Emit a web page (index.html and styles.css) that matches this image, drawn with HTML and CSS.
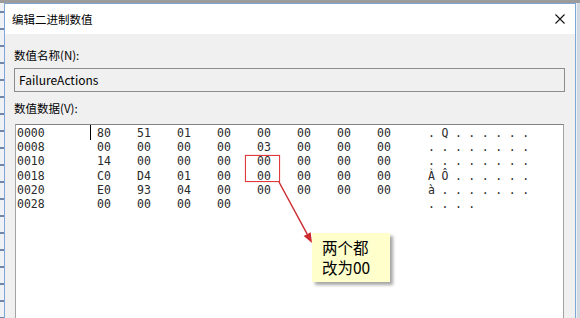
FILE: index.html
```html
<!DOCTYPE html>
<html lang="zh-CN">
  <head>
    <meta charset="UTF-8" />
    <title>编辑二进制数值</title>
    <link rel="stylesheet" href="styles.css">
  </head>
  <body>
    <div class="screen">
      <div class="topband"></div>
      <div class="main">
        <div class="behind"></div>
        <div class="dialog">
          <div class="titlebar">
            <span class="title">编辑二进制数值</span>
            <svg class="close" width="10" height="10" viewBox="0 0 10 10">
              <path d="M0.5 0.5 L9.5 9.5 M9.5 0.5 L0.5 9.5" stroke="#111" stroke-width="1.1" fill="none" />
            </svg>
          </div>
          <div class="content">
            <div class="field-label">数值名称(N):</div>
            <div class="name-input">FailureActions</div>
            <div class="field-label second">数值数据(V):</div>
            <div class="hexbox">
              <div class="row"><span>0000</span><span class="cur">80</span><span>51</span><span>01</span><span>00</span><span>00</span><span>00</span><span>00</span><span>00</span><span class="ascii">. Q . . . . . .</span></div>
              <div class="row"><span>0008</span><span>00</span><span>00</span><span>00</span><span>00</span><span>03</span><span>00</span><span>00</span><span>00</span><span class="ascii">. . . . . . . .</span></div>
              <div class="row"><span>0010</span><span>14</span><span>00</span><span>00</span><span>00</span><span>00</span><span>00</span><span>00</span><span>00</span><span class="ascii">. . . . . . . .</span></div>
              <div class="row"><span>0018</span><span>C0</span><span>D4</span><span>01</span><span>00</span><span>00</span><span>00</span><span>00</span><span>00</span><span class="ascii">À Ô . . . . . .</span></div>
              <div class="row"><span>0020</span><span>E0</span><span>93</span><span>04</span><span>00</span><span>00</span><span>00</span><span>00</span><span>00</span><span class="ascii">à . . . . . . .</span></div>
              <div class="row"><span>0028</span><span>00</span><span>00</span><span>00</span><span>00</span><span></span><span></span><span></span><span></span><span class="ascii">. . . .</span></div>

              <!-- 标注 -->
              <div class="mark"></div>
              <svg class="arrow" width="320" height="140" viewBox="0 0 320 140">
                <path d="M263 57 L291.2 109.2" stroke="#cc2a2e" stroke-width="1.4" fill="none" />
                <path d="M287.7 111.1 L294.7 107.3 L296 118 Z" fill="#cc2a2e" />
              </svg>
              <div class="callout">
                <div class="line">两个都</div>
                <div class="line">改为00</div>
              </div>
            </div>
          </div>
        </div>
        <div class="after"></div>
      </div>
    </div>
  </body>
</html>
```

FILE: styles.css
```css
* {
  margin: 0;
  padding: 0;
  box-sizing: border-box;
}
body {
  width: 580px;
  height: 318px;
  overflow: hidden;
  background: #d6dde6;
  font-family: "Noto Sans CJK SC", sans-serif;
  color: #000;
}
.screen {
  display: flex;
  flex-direction: column;
  height: 318px;
}
.topband {
  height: 3px;
  background: #9b9b9b;
}
.main {
  display: flex;
  flex: 1;
  min-height: 0;
}
.behind {
  width: 4px;
  background: repeating-linear-gradient(to bottom, #eef1f5 0, #eef1f5 8px, #6f86a8 8px, #6f86a8 10px, #eef1f5 10px, #eef1f5 17px);
}
.after {
  width: 4px;
  background: #d2d9e2;
  border-left: 1px solid #eef1f4;
}
.dialog {
  flex: 1;
  display: flex;
  flex-direction: column;
  background: #f0f0f0;
  border: 1px solid #7ea6d6;
  border-bottom: none;
}
.titlebar {
  height: 30px;
  background: #fff;
  display: flex;
  align-items: center;
  justify-content: space-between;
  padding: 0 10px 0 7px;
}
.title {
  font-size: 11.5px;
  line-height: 16px;
}
.close {
  display: block;
}
.content {
  flex: 1;
  min-height: 0;
  display: flex;
  flex-direction: column;
  padding: 13px 10px 0 9px;
}
.field-label {
  font-size: 11.5px;
  line-height: 16px;
}
.field-label.second {
  margin-top: 8px;
}
.name-input {
  margin-top: 5px;
  height: 24px;
  border: 1px solid #8c8c8c;
  background: #f0f0f0;
  padding-left: 4px;
  font-size: 12px;
  line-height: 22px;
}
.hexbox {
  position: relative;
  flex: 1;
  margin: 8px 1px 0 1px;
  padding: 1px 0 0 1px;
  background: #fff;
  border: 1px solid #a3a3a3;
  border-top-color: #828282;
  border-bottom: none;
  font-family: "DejaVu Sans Mono", monospace;
  font-size: 11.5px;
  color: #2a2a2a;
}
.row {
  display: grid;
  grid-template-columns: 80px repeat(8, 40px) auto;
  height: 14.2px;
  line-height: 14.2px;
  white-space: pre;
}
.row .ascii {
  padding-left: 11px;
  letter-spacing: -0.2px;
}
.row .cur {
  position: relative;
}
.row .cur::before {
  content: "";
  position: absolute;
  left: -7px;
  top: -1px;
  width: 1px;
  height: 15px;
  background: #000;
}
.mark {
  position: absolute;
  left: 229px;
  top: 30px;
  width: 35px;
  height: 27px;
  border: 1px solid #e03a3e;
  box-shadow: 0 0 1px rgba(220, 50, 55, 0.6);
}
.arrow {
  position: absolute;
  left: 0;
  top: 0;
}
.callout {
  position: absolute;
  left: 296px;
  top: 108px;
  width: 78px;
  height: 49px;
  padding: 4px 0 0 10px;
  background: #ffffcc;
  box-shadow: 3px 3px 3px rgba(0, 0, 0, 0.35);
  font-family: "Noto Sans CJK SC", sans-serif;
  font-size: 15.5px;
  color: #000;
}
.callout .line {
  height: 20px;
  line-height: 20px;
}
```
